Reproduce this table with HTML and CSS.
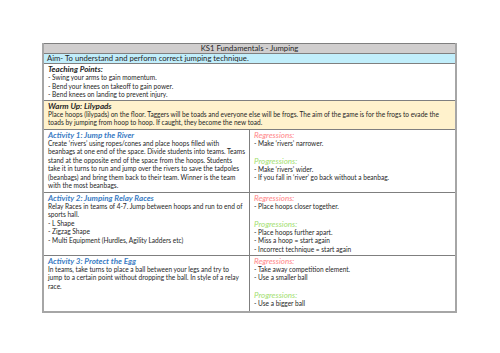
FILE: index.html
```html
<!DOCTYPE html>
<html>
<head>
<meta charset="utf-8">
<link rel="stylesheet" href="styles.css">
</head>
<body>
<div class="page">
<table class="plan">
  <tr class="r-title"><td colspan="2" class="title">KS1 Fundamentals - Jumping</td></tr>
  <tr class="r-aim"><td colspan="2" class="aim">Aim- To understand and perform correct jumping technique.</td></tr>
  <tr class="r-teach"><td colspan="2" class="teach">
    <div class="head">Teaching Points:</div>
    <div>- Swing your arms to gain momentum.</div>
    <div>- Bend your knees on takeoff to gain power.</div>
    <div>- Bend knees on landing to prevent injury.</div>
  </td></tr>
  <tr class="r-warm"><td colspan="2" class="warm">
    <div class="head">Warm Up: Lilypads</div>
    <div>Place hoops (lilypads) on the floor. Taggers will be toads and everyone else will be frogs. The aim of the game is for the frogs to evade the<br>toads by jumping from hoop to hoop. If caught, they become the new toad.</div>
  </td></tr>
  <tr class="act act1">
    <td class="left">
      <div class="ahead">Activity 1: Jump the River</div>
      <div>Create ‘rivers’ using ropes/cones and place hoops filled with<br>beanbags at one end of the space. Divide students into teams. Teams<br>stand at the opposite end of the space from the hoops. Students<br>take it in turns to run and jump over the rivers to save the tadpoles<br>(beanbags) and bring them back to their team. Winner is the team<br>with the most beanbags.</div>
    </td>
    <td class="right">
      <div class="reg">Regressions:</div>
      <div>- Make ‘rivers’ narrower.</div>
      <div class="blank">&nbsp;</div>
      <div class="prog">Progressions:</div>
      <div>- Make ‘rivers’ wider.</div>
      <div>- If you fall in ‘river’ go back without a beanbag.</div>
    </td>
  </tr>
  <tr class="act act2">
    <td class="left">
      <div class="ahead">Activity 2: Jumping Relay Races</div>
      <div>Relay Races in teams of 4-7. Jump between hoops and run to end of<br>sports hall.</div>
      <div>- L Shape</div>
      <div>- Zigzag Shape</div>
      <div>- Multi Equipment (Hurdles, Agility Ladders etc)</div>
    </td>
    <td class="right">
      <div class="reg">Regressions:</div>
      <div>- Place hoops closer together.</div>
      <div class="blank">&nbsp;</div>
      <div class="prog">Progressions:</div>
      <div>- Place hoops further apart.</div>
      <div>- Miss a hoop = start again</div>
      <div>- Incorrect technique = start again</div>
    </td>
  </tr>
  <tr class="act act3">
    <td class="left">
      <div class="ahead">Activity 3: Protect the Egg</div>
      <div>In teams, take turns to place a ball between your legs and try to<br>jump to a certain point without dropping the ball. In style of a relay<br>race.</div>
    </td>
    <td class="right">
      <div class="reg">Regressions:</div>
      <div>- Take away competition element.</div>
      <div>- Use a smaller ball</div>
      <div class="blank">&nbsp;</div>
      <div class="prog">Progressions:</div>
      <div>- Use a bigger ball</div>
    </td>
  </tr>
</table>
</div>
</body>
</html>
```

FILE: styles.css
```css
html, body {
  margin: 0;
  padding: 0;
  background: #ffffff;
}
.page {
  padding: 43px 0 0 42px;
}
.plan {
  width: 415px;
  border-collapse: collapse;
  table-layout: fixed;
  font-family: Lato, "Open Sans", sans-serif;
  font-size: 6.55px;
  line-height: 8.5px;
  color: #262626;
  border-left: 2px solid #a6a6a6;
  border-right: 2px solid #a6a6a6;
  border-bottom: 2px solid #a6a6a6;
  border-top: 1px solid #a6a6a6;
}
.plan td {
  border: 1px solid #7f7f7f;
  padding: 1px 2px 0 4px;
  vertical-align: top;
  box-sizing: border-box;
}
.plan td.left { width: 208px; }
.title {
  background: #d0cece;
  text-align: center;
  font-size: 7.7px;
  line-height: 9px;
  padding: 0 !important;
}
.aim {
  background: #c1eefb;
  font-size: 7.7px;
  line-height: 9px;
  padding: 0 3px !important;
}
.warm {
  background: #fff2cc;
}
.head {
  font-weight: bold;
  font-style: italic;
  font-size: 8px;
  line-height: 9px;
}
.ahead {
  font-weight: bold;
  font-style: italic;
  font-size: 8px;
  line-height: 9px;
  color: #3a7cc4;
}
.reg {
  font-style: italic;
  font-size: 8px;
  line-height: 9px;
  color: #ff8587;
}
.prog {
  font-style: italic;
  font-size: 8px;
  line-height: 9px;
  color: #a3e06f;
}
.r-teach td { height: 35px; }
.r-warm td { height: 29px; }
.act1 td { height: 63px; }
.act2 td { height: 63px; }
.act3 td { height: 57px; }
```
